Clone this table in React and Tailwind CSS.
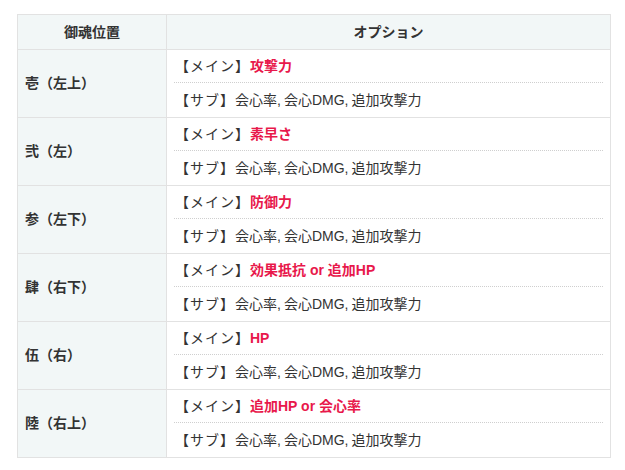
export default function App() {
  const rows = [
    ["壱（左上）", "攻撃力"],
    ["弐（左）", "素早さ"],
    ["参（左下）", "防御力"],
    ["肆（右下）", "効果抵抗 or 追加HP"],
    ["伍（右）", "HP"],
    ["陸（右上）", "追加HP or 会心率"],
  ];
  return (
    <div className="w-[625px] h-[470px] bg-white pt-[14px] pl-[17px]" style={{ fontFamily: '"Liberation Sans", "Noto Sans CJK JP", sans-serif' }}>
      <table className="border-collapse w-[594px] text-[14px] text-[#333]">
        <thead>
          <tr className="h-[35px] bg-[#f2f7f7]">
            <th className="w-[149px] border border-[#e2e2e2] font-bold text-center">御魂位置</th>
            <th className="border border-[#e2e2e2] font-bold text-center">オプション</th>
          </tr>
        </thead>
        <tbody>
          {rows.map(([pos, main]) => (
            <tr key={pos} className="h-[68px]">
              <td className="border border-[#e2e2e2] bg-[#f2f7f7] font-bold pl-[7px]">{pos}</td>
              <td className="border border-[#e2e2e2] px-[7px] py-0">
                <div className="h-[33px] flex items-center border-b border-dotted border-[#cfcfcf]">
                  <span className="tracking-[1px] ml-[1px]">【メイン】</span>
                  <span className="text-[#e8184b] font-bold">{main}</span>
                </div>
                <div className="h-[34px] flex items-center">
                  <span className="tracking-[1px] ml-[1px]">【サブ】</span>
                  <span>会心率<span className="mr-[3px]">,</span>会心DMG<span className="mr-[3px]">,</span>追加攻撃力</span>
                </div>
              </td>
            </tr>
          ))}
        </tbody>
      </table>
    </div>
  );
}
